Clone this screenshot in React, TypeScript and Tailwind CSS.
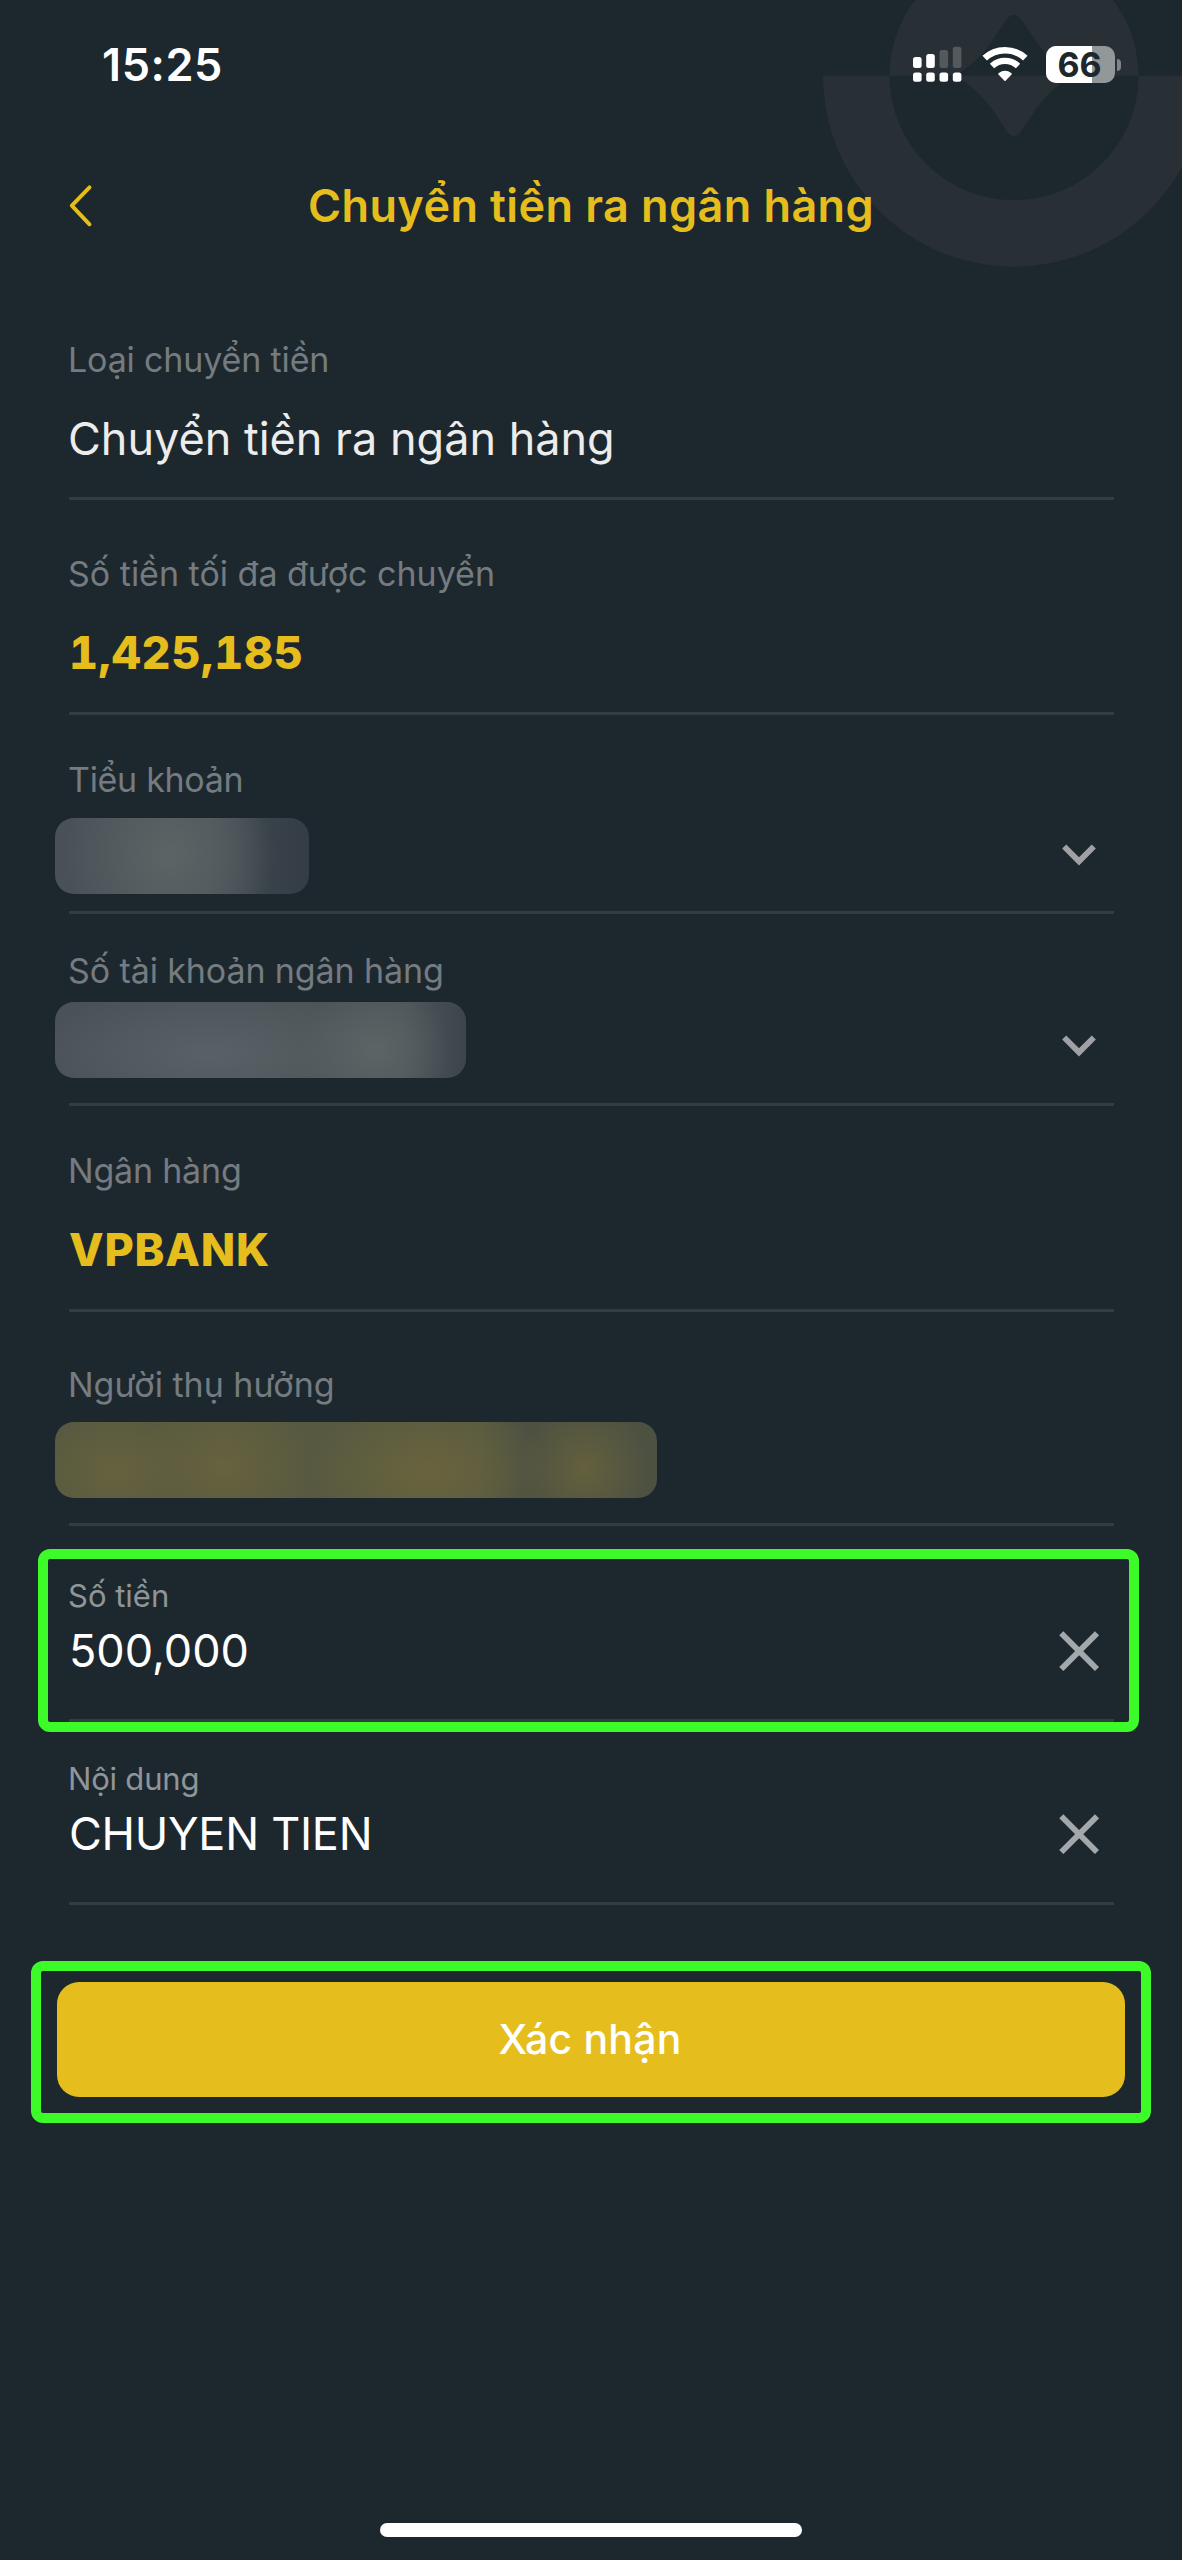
import React from "react";

type FieldProps = {
  label: string;
  className: string;
  labelClassName?: string;
  children: React.ReactNode;
};

// Champ du formulaire : libellé, valeur, trait de séparation
function Field({
  label,
  className,
  labelClassName = "text-[34px] leading-[40px] text-[#757b80]",
  children,
}: FieldProps) {
  return (
    <div className={`relative border-b-[3px] border-[#323c43] ${className}`}>
      <div className={`-ml-px whitespace-nowrap ${labelClassName}`}>{label}</div>
      {children}
    </div>
  );
}

function ChevronIcon({ className = "" }: { className?: string }) {
  return (
    <svg
      width="40"
      height="28"
      viewBox="0 0 40 28"
      fill="none"
      className={`mr-[15px] shrink-0 box-content ${className}`}
    >
      <path d="M5.2 4.500 20 19.300 34.800 4.500" stroke="#9fa1a4" strokeWidth="5.800" />
    </svg>
  );
}

function ClearIcon() {
  return (
    <svg
      width="40"
      height="40"
      viewBox="0 0 40 40"
      fill="none"
      className="mr-[15px] shrink-0"
    >
      <path
        d="M2.300 2.300 38 38M38 2.300 2.300 38"
        stroke="#a3a8aa"
        strokeWidth="5.800"
      />
    </svg>
  );
}

// Logo en filigrane dans le coin supérieur droit
function Watermark() {
  return (
    <svg
      width="382"
      height="270"
      viewBox="800 0 382 270"
      className="absolute right-0 top-0"
      fill="#282f35"
    >
      <path d="M823 75.7A191 191 0 0 0 1205 75.7H1138.5A124.5 124.5 0 0 1 889.5 75.7Z" />
      <path
        fillRule="evenodd"
        d="M889.5 75.7A124.5 124.5 0 0 1 1138.5 75.7H1073C1056 66 1043 52 1036 41L1020.500 18.500Q1014 11 1007.500 18.500L992 41C985 52 972 66 955 75.700Z"
      />
      <path d="M955 75.700H1073C1056 85 1043 99 1036 109L1020.500 132Q1014 140 1007.500 132L992 109C985 99 972 85 955 75.700Z" />
    </svg>
  );
}

function SignalIcon() {
  return (
    <svg width="49" height="36" viewBox="0 0 49 36" fill="#fff">
      <rect x="0" y="11" width="8.600" height="11" rx="2.500" />
      <rect x="13.200" y="8" width="8.600" height="14" rx="2.500" />
      <g fill="#53595d">
        <rect x="26.500" y="4" width="8.600" height="18" rx="2.500" />
        <rect x="39.800" y="0.700" width="8.600" height="21.300" rx="2.500" />
      </g>
      <rect x="0" y="26.600" width="8.600" height="9.200" rx="2.500" />
      <rect x="13.200" y="26.600" width="8.600" height="9.200" rx="2.500" />
      <rect x="26.500" y="26.600" width="8.600" height="9.200" rx="2.500" />
      <rect x="39.800" y="26.600" width="8.600" height="9.200" rx="2.500" />
    </svg>
  );
}

function WifiIcon() {
  return (
    <svg width="46" height="36" viewBox="0 0 46 36" fill="none" stroke="#fff">
      <path d="M2.700 12.200C14 1.500 32 1.500 43.300 12.200" strokeWidth="6.600" />
      <path d="M10 20C17.500 13.200 28.500 13.200 36 20" strokeWidth="6.400" />
      <path
        d="M17 27.900Q23 23.400 29 27.900L23 34.100Z"
        fill="#fff"
        strokeWidth="1.600"
        strokeLinejoin="round"
      />
    </svg>
  );
}

function Battery({ level }: { level: number }) {
  return (
    <div className="flex items-center">
      <div className="relative flex h-[37px] w-[69px] items-center justify-center rounded-[10px] bg-[#92979a] pr-[2px]">
        <div
          className="absolute inset-y-0 left-0 rounded-l-[10px] bg-white"
          style={{ width: `${level}%` }}
        />
        <span className="relative text-[34px] font-bold leading-[37px] text-[#1d282e]">
          {level}
        </span>
      </div>
      <div className="ml-[2px] h-[12px] w-[4px] rounded-r-full bg-[#7e8487]" />
    </div>
  );
}

export default function App() {
  const valueRow = "flex items-center justify-between";
  const value = "text-[45px] leading-[56px] whitespace-nowrap";
  const smallLabel = "text-[31px] leading-[36px] text-[#8f9599]";

  return (
    <div className="relative flex h-[2560px] w-[1182px] flex-col overflow-hidden bg-[#1d282e] font-['Inter','Liberation_Sans',sans-serif]">
      <Watermark />

      {/* Barre d'état */}
      <div className="relative flex h-[130px] justify-between pl-[102px] pr-[61px]">
        <span className="mt-[37px] text-[45px] font-semibold leading-[56px] tracking-[0.6px] text-white">
          15:25
        </span>
        <div className="mt-[46px] flex h-[37px] items-start gap-[18px]">
          <div className="mr-[2px]">
            <SignalIcon />
          </div>
          <WifiIcon />
          <Battery level={66} />
        </div>
      </div>

      {/* En-tête */}
      <header className="relative flex h-[160px] justify-center pt-[48px]">
        <svg
          width="30"
          height="44"
          viewBox="0 0 30 44"
          fill="none"
          className="absolute left-[65px] top-[54px]"
        >
          <path
            d="M24.500 3.300 6.800 21.700 24.500 40.300"
            stroke="#e5be1d"
            strokeWidth="3.900"
            strokeLinecap="round"
            strokeLinejoin="round"
          />
        </svg>
        <h1 className="text-[45px] font-semibold leading-[56px] tracking-[0.4px] text-[#e5be1d]">
          Chuyển tiền ra ngân hàng
        </h1>
      </header>

      <main className="relative pl-[69px] pr-[68px]">
        <Field
          label="Loại chuyển tiền"
          className="h-[210px] pt-[50px]"
          labelClassName="text-[34px] leading-[40px] tracking-[-0.15px] text-[#757b80]"
        >
          <div className={`-ml-px mt-[31px] text-[#ececed] ${value}`}>
            Chuyển tiền ra ngân hàng
          </div>
        </Field>

        <Field
          label="Số tiền tối đa được chuyển"
          className="h-[215px] pt-[54px]"
        >
          <div
            className={`mt-[31px] font-extrabold tabular-nums tracking-[0.8px] text-[#e5be1d] ${value}`}
          >
            1,425,185
          </div>
        </Field>

        <Field
          label="Tiểu khoản"
          className="h-[199px] pt-[45px]"
          labelClassName="text-[34px] leading-[40px] tracking-[-0.3px] text-[#757b80]"
        >
          <div className={`mt-[18px] ${valueRow}`}>
            <div className="-ml-[14px] h-[76px] w-[254px] rounded-[19px] bg-[radial-gradient(ellipse_105px_110px_at_45%_48%,#5c6465_0%,#565d61_40%,transparent_100%),linear-gradient(90deg,#495157_0%,#4b5359_60%,#3a434a_82%,#343d45_100%)]" />
            <ChevronIcon />
          </div>
        </Field>

        <Field
          label="Số tài khoản ngân hàng"
          className="h-[192px] pt-[37px]"
          labelClassName="text-[34px] leading-[40px] tracking-[-0.1px] text-[#757b80]"
        >
          <div className={`mt-[11px] ${valueRow}`}>
            <div className="-ml-[14px] h-[76px] w-[411px] rounded-[19px] bg-[radial-gradient(ellipse_75px_70px_at_78%_62%,#5d6466_0%,transparent_100%),radial-gradient(ellipse_180px_65px_at_38%_68%,#5a6166_0%,transparent_100%),linear-gradient(90deg,#4a5258_0%,#4d5559_85%,#3c454c_100%)]" />
            <ChevronIcon className="pt-[13px]" />
          </div>
        </Field>

        <Field
          label="Ngân hàng"
          className="h-[206px] pt-[45px]"
          labelClassName="text-[34px] leading-[40px] tracking-[-0.2px] text-[#757b80]"
        >
          <div
            className={`mt-[31px] font-extrabold tracking-[0.8px] text-[#e5be1d] ${value}`}
          >
            VPBANK
          </div>
        </Field>

        <Field label="Người thụ hưởng" className="h-[214px] pt-[53px]">
          <div className="-ml-[14px] mt-[17px] h-[76px] w-[602px] rounded-[19px] bg-[radial-gradient(ellipse_80px_65px_at_10%_65%,#66623d_0%,transparent_100%),radial-gradient(ellipse_90px_80px_at_28%_58%,#67623e_0%,transparent_100%),radial-gradient(ellipse_120px_75px_at_62%_65%,#69643d_0%,transparent_100%),radial-gradient(ellipse_65px_70px_at_88%_62%,#64603d_0%,transparent_100%),linear-gradient(90deg,#575941_0%,#575941_70%,#4d5142_78%,#4d5142_100%)]" />
        </Field>

        <Field
          label="Số tiền"
          className="h-[196px] pt-[52px]"
          labelClassName={smallLabel}
        >
          <div className={`mt-[9px] text-white ${valueRow} ${value}`}>
            500,000
            <ClearIcon />
          </div>
          {/* Cadre de mise en évidence */}
          <div className="pointer-events-none absolute -bottom-[13px] -left-[31px] -right-[25px] top-[23px] rounded-[12px] border-[10px] border-[#3dfb29]" />
        </Field>

        <Field
          label="Nội dung"
          className="h-[183px] pt-[39px]"
          labelClassName="text-[31px] leading-[36px] tracking-[-0.2px] text-[#8f9599]"
        >
          <div
            className={`mt-[9px] tracking-[-0.25px] text-white ${valueRow} ${value}`}
          >
            CHUYEN TIEN
            <ClearIcon />
          </div>
        </Field>
      </main>

      {/* Bouton de confirmation */}
      <div className="relative mx-[31px] mt-[56px] h-[162px] rounded-[12px] border-[10px] border-[#3dfb29] px-[16px] pt-[11px]">
        <button className="flex h-[115px] w-full items-center justify-center rounded-[22px] bg-[#e5be1d] pr-[2px] text-[41px] font-medium tracking-[0.2px] text-white">
          Xác nhận
        </button>
      </div>

      <div className="mb-[23px] ml-[380px] mt-auto h-[14px] w-[422px] rounded-full bg-white" />
    </div>
  );
}
